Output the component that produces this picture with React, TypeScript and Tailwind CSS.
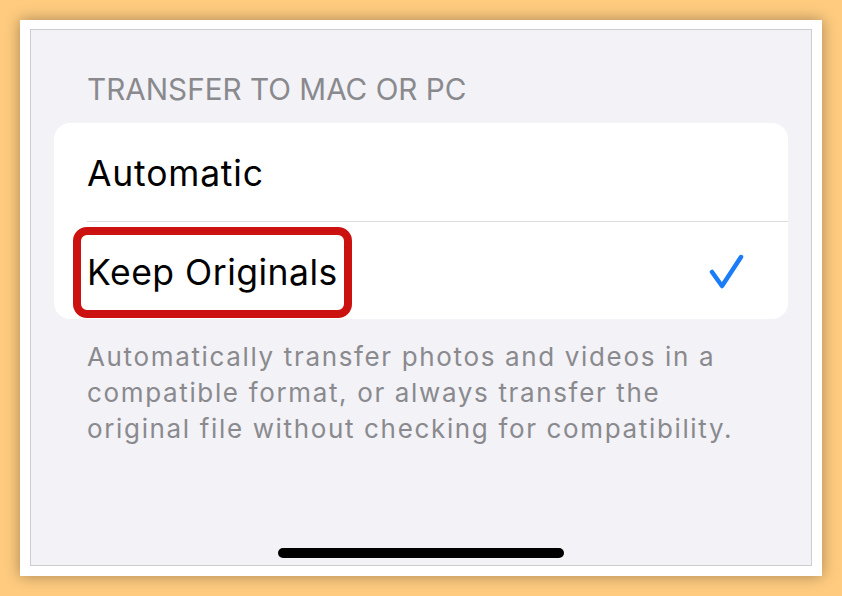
import React from "react";

const font = { fontFamily: "Inter, 'Liberation Sans', sans-serif" };

export default function App() {
  return (
    <div className="w-[842px] h-[596px] bg-[#fecb7f] p-[20px]" style={font}>
      {/* white photo frame */}
      <div className="h-full bg-white shadow-[0_0_14px_rgba(0,0,0,0.35)] pt-[9px] px-[10px] pb-[10px]">
        {/* iOS screen */}
        <div className="h-full flex flex-col border border-[#cdcdd1] bg-[#f2f2f7]">
          <div className="mt-[41px] pl-[56px] text-[29.7px] leading-[36px] text-[#8a8a8e]">
            TRANSFER TO MAC OR PC
          </div>

          {/* options card */}
          <div className="mt-[16px] mx-[23px] rounded-[16px] bg-white">
            <div className="h-[98px] flex items-center pl-[33px] pt-[4px] text-[35.5px] leading-[42px] tracking-[0.8px] text-black">
              Automatic
            </div>
            <div className="ml-[33px] h-px bg-[#dcdce0]" />
            <div className="relative h-[97px] flex items-center justify-between pl-[33px] pr-[42px] pt-[4px] text-[35.5px] leading-[42px] tracking-[0.5px] text-black">
              <span>Keep Originals</span>
              <svg width="40" height="40" viewBox="0 0 40 40" className="mt-[-2px]">
                <path
                  d="M6 20 L16 34 L35 5"
                  fill="none"
                  stroke="#1a7cf6"
                  strokeWidth="4.5"
                  strokeLinecap="round"
                  strokeLinejoin="round"
                />
              </svg>
              {/* red highlight */}
              <div className="absolute left-[19px] top-[5px] w-[279px] h-[91px] rounded-[14px] border-[8px] border-[#cc1111]" />
            </div>
          </div>

          <p className="mt-[20px] pl-[56px] text-[26px] leading-[36px] tracking-[1.65px] text-[#8a8a8e]">
            Automatically transfer photos and videos in a
            <br />
            compatible format, or always transfer the
            <br />
            original file without checking for compatibility.
          </p>

          <div className="mt-auto mb-[7px] mx-auto w-[286px] h-[10px] rounded-full bg-black" />
        </div>
      </div>
    </div>
  );
}
